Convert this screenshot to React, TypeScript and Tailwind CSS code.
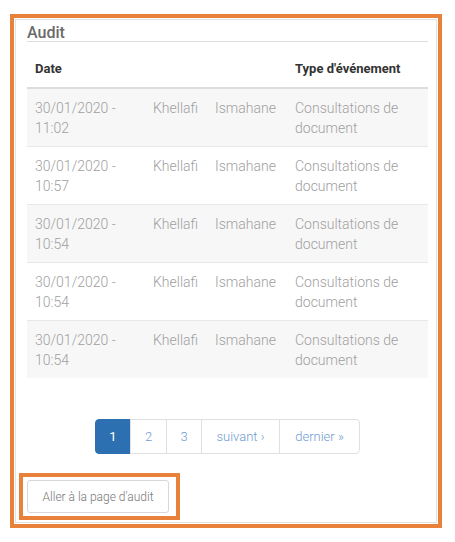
import React from "react";

const rows = [
  { date: "30/01/2020 -", time: "11:02" },
  { date: "30/01/2020 -", time: "10:57" },
  { date: "30/01/2020 -", time: "10:54" },
  { date: "30/01/2020 -", time: "10:54" },
  { date: "30/01/2020 -", time: "10:54" },
];

const pages = [
  { label: "1", active: true, w: "w-[36px]" },
  { label: "2", w: "w-[37px]" },
  { label: "3", w: "w-[36px]" },
  { label: "suivant ›", w: "w-[79px]" },
  { label: "dernier »", w: "w-[81px]" },
];

export default function App() {
  return (
    <div className="min-h-[542px] bg-white font-['Roboto',sans-serif] pt-[14px] pl-[10px]">
      <div className="w-[432px] h-[514px] border-4 border-[#e8823a] p-px">
        <div className="h-full border border-[#e2e2e2] pl-[11px] pr-[8px] pt-[5px] pb-[2px] flex flex-col">
          <h2 className="text-[16px] leading-4 font-medium text-[#6a6a6a] border-b border-[#dddddd]">
            Audit
          </h2>

          <table className="mt-[9px] w-[401px] table-fixed border-collapse text-[14px]">
            <colgroup>
              <col className="w-[118px]" />
              <col className="w-[62px]" />
              <col className="w-[80px]" />
              <col className="w-[141px]" />
            </colgroup>
            <thead>
              <tr className="border-b-2 border-[#dddddd]">
                <th className="px-2 py-2 text-left text-[13px] leading-5 font-bold text-[#333]">Date</th>
                <th />
                <th />
                <th className="px-2 py-2 text-left text-[13px] leading-5 font-bold text-[#333] whitespace-nowrap">
                  Type d'événement
                </th>
              </tr>
            </thead>
            <tbody>
              {rows.map((r, i) => (
                <tr
                  key={i}
                  className={`${i > 0 ? "border-t border-[#e8e8e8]" : ""} ${i % 2 === 0 ? "bg-[#f7f7f7]" : "bg-white"}`}
                >
                  <td className="px-2 pt-[9px] pb-[8px] align-top leading-5 font-light text-[#a0a0a0]">
                    {r.date}
                    <br />
                    {r.time}
                  </td>
                  <td className="px-2 pt-[9px] pb-[8px] align-top leading-5 font-light text-[#a0a0a0]">Khellafi</td>
                  <td className="px-2 pt-[9px] pb-[8px] align-top leading-5 font-light text-[#a0a0a0]">Ismahane</td>
                  <td className="px-2 pt-[9px] pb-[8px] align-top leading-5 font-light text-[#a0a0a0]">
                    Consultations de
                    <br />
                    document
                  </td>
                </tr>
              ))}
            </tbody>
          </table>

          <div className="mt-[41px] w-[401px] flex justify-center">
            <div className="flex h-[35px]">
              {pages.map((p, i) => (
                <span
                  key={p.label}
                  className={`${p.w} flex items-center justify-center text-[13px] border ${
                    i > 0 ? "-ml-px" : ""
                  } ${i === 0 ? "rounded-l-[4px]" : ""} ${i === pages.length - 1 ? "rounded-r-[4px]" : ""} ${
                    p.active
                      ? "bg-[#2c70b1] border-[#2c70b1] text-white font-normal"
                      : "bg-white border-[#e0e0e0] text-[#6f9bcf] font-light"
                  }`}
                >
                  {p.label}
                </span>
              ))}
            </div>
          </div>

          <div className="mt-auto -ml-[8px] self-start border-4 border-[#e8823a] pt-[3px] pb-[3px] pl-[4px] pr-[7px]">
            <button className="w-[142px] h-[33px] border border-[#d8d8d8] rounded-[3px] bg-white text-[12px] font-light text-[#777]">
              Aller à la page d'audit
            </button>
          </div>
        </div>
      </div>
    </div>
  );
}
